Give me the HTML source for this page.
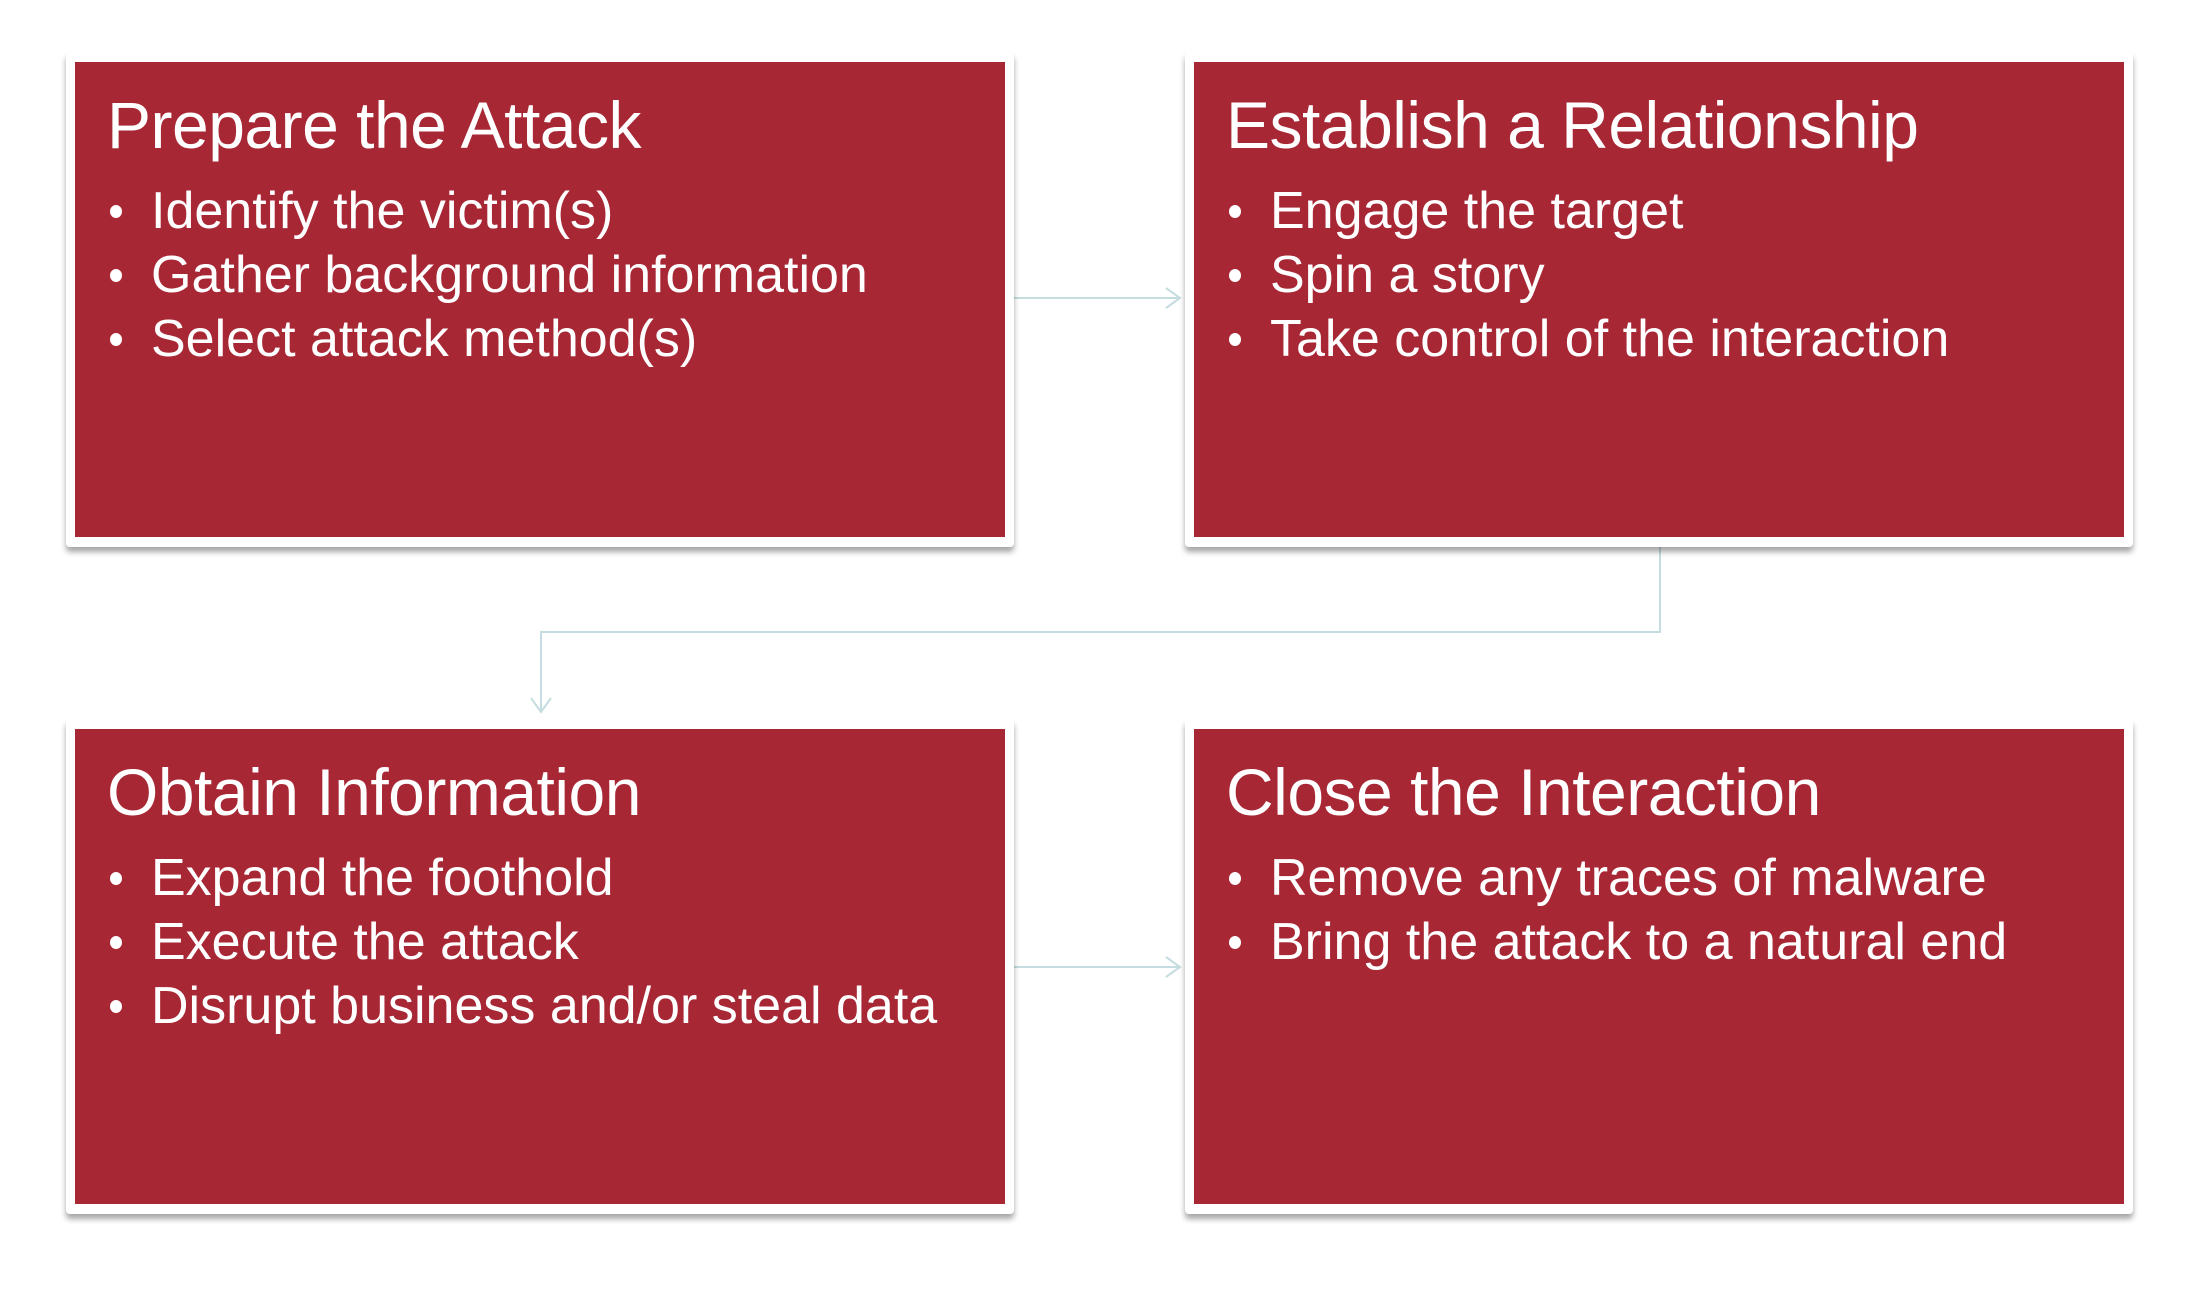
<!DOCTYPE html>
<html><head><meta charset="utf-8"><style>
html,body{margin:0;padding:0;background:#fff;width:2196px;height:1296px;overflow:hidden;font-family:"Liberation Sans",Arial,sans-serif;}
.box{position:absolute;width:948px;height:495px;background:#fff;border-radius:4px;box-shadow:0 5px 6px rgba(0,0,0,0.35);}
.red{position:absolute;left:9px;top:10px;right:9px;bottom:10px;background:#a82735;}
.t{position:absolute;left:32px;top:30px;font-size:66px;line-height:66px;color:#fff;white-space:nowrap;letter-spacing:-0.5px;}
ul{position:absolute;left:32px;top:117px;margin:0;padding:0;list-style:none;color:#fff;font-size:52px;line-height:64px;white-space:nowrap;}
li{position:relative;padding-left:44px;}
li:before{content:"";position:absolute;left:3px;top:26px;width:12px;height:13px;border-radius:50%;background:#fff;}
</style></head><body>
<svg width="2196" height="1296" style="position:absolute;left:0;top:0" fill="none" stroke="#c5dde0" stroke-width="2">
<path d="M1014 298H1180M1166 288L1180 298L1166 308"/>
<path d="M1014 967H1180M1166 957L1180 967L1166 977"/>
<path d="M1660 546V632H541V712M531 698L541 712L551 698"/>
</svg>
<div class="box" style="left:66px;top:52px"><div class="red">
<div class="t">Prepare the Attack</div>
<ul><li>Identify the victim(s)</li><li>Gather background information</li><li>Select attack method(s)</li></ul>
</div></div>
<div class="box" style="left:1185px;top:52px"><div class="red">
<div class="t">Establish a Relationship</div>
<ul><li>Engage the target</li><li>Spin a story</li><li>Take control of the interaction</li></ul>
</div></div>
<div class="box" style="left:66px;top:719px"><div class="red">
<div class="t">Obtain Information</div>
<ul><li>Expand the foothold</li><li>Execute the attack</li><li>Disrupt business and/or steal data</li></ul>
</div></div>
<div class="box" style="left:1185px;top:719px"><div class="red">
<div class="t">Close the Interaction</div>
<ul><li>Remove any traces of malware</li><li>Bring the attack to a natural end</li></ul>
</div></div>
</body></html>
